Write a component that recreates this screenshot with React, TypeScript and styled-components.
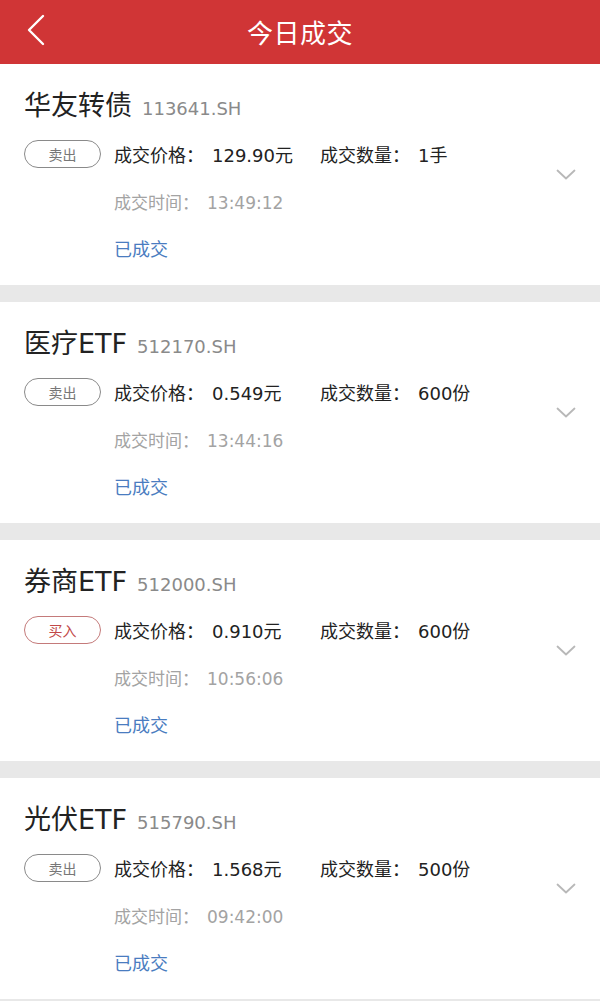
import styled, { createGlobalStyle } from "styled-components";

const GlobalStyle = createGlobalStyle`
	html, body {
		margin: 0;
		padding: 0;
		background: #e8e8e8;
		font-family: "DejaVu Sans", "Noto Sans CJK SC", sans-serif;
	}
`;

type Trade = {
	name: string;
	code: string;
	side: "buy" | "sell";
	price: string;
	qty: string;
	time: string;
};

const trades: Trade[] = [
	{ name: "华友转债", code: "113641.SH", side: "sell", price: "129.90元", qty: "1手", time: "13:49:12" },
	{ name: "医疗ETF", code: "512170.SH", side: "sell", price: "0.549元", qty: "600份", time: "13:44:16" },
	{ name: "券商ETF", code: "512000.SH", side: "buy", price: "0.910元", qty: "600份", time: "10:56:06" },
	{ name: "光伏ETF", code: "515790.SH", side: "sell", price: "1.568元", qty: "500份", time: "09:42:00" },
];

const BackIcon = () => (
	<svg width="20" height="32" viewBox="0 0 20 32" fill="none">
		<path d="M17 2 L3 16 L17 30" stroke="#fff" strokeWidth="2.4" strokeLinecap="round" strokeLinejoin="round" />
	</svg>
);

const ChevronDown = () => (
	<svg width="20" height="12" viewBox="0 0 20 12" fill="none">
		<path d="M1.5 1.5 L10 9.5 L18.5 1.5" stroke="#b8b8b8" strokeWidth="1.8" strokeLinecap="round" strokeLinejoin="round" />
	</svg>
);

const App = () => {
	return (
		<Page>
			<GlobalStyle />
			<Header>
				<BackButton>
					<BackIcon />
				</BackButton>
				<Title>今日成交</Title>
			</Header>
			<List>
				{trades.map((t) => (
					<Card key={t.code}>
						<Content>
							<NameRow>
								<StockName>{t.name}</StockName>
								<StockCode>{t.code}</StockCode>
							</NameRow>
							<Details>
								<SideBadge side={t.side}>{t.side === "buy" ? "买入" : "卖出"}</SideBadge>
								<Fields>
									<Field $wide>
										成交价格：<Value>{t.price}</Value>
									</Field>
									<Field>
										成交数量：<Value>{t.qty}</Value>
									</Field>
								</Fields>
								<Spacer />
								<TimeText>
									成交时间：<Value>{t.time}</Value>
								</TimeText>
								<Spacer />
								<Status>已成交</Status>
							</Details>
						</Content>
						<Expand>
							<ChevronDown />
						</Expand>
					</Card>
				))}
			</List>
		</Page>
	);
};

const Page = styled.div`
	width: 600px;
	min-height: 1001px;
	background: #e8e8e8;
`;

const Header = styled.div`
	height: 64px;
	background: #d03536;
	display: flex;
	align-items: center;
	justify-content: center;
	position: relative;
`;

const BackButton = styled.div`
	position: absolute;
	left: 26px;
	top: 14px;
	display: flex;
`;

const Title = styled.div`
	color: #fff;
	font-family: "Noto Sans CJK SC", sans-serif;
	font-size: 26px;
	font-weight: 400;
	letter-spacing: 0.5px;
	margin-top: -2px;
`;

const List = styled.div`
	display: flex;
	flex-direction: column;
	gap: 17px;
`;

const Card = styled.div`
	background: #fff;
	height: 221px;
	box-sizing: border-box;
	padding: 25px 24px 0 24px;
	display: flex;
	align-items: flex-start;
`;

const Content = styled.div`
	flex: 1;
	display: flex;
	flex-direction: column;
`;

const NameRow = styled.div`
	display: flex;
	align-items: baseline;
	gap: 10px;
	height: 34px;
	line-height: 34px;
`;

const StockName = styled.span`
	font-size: 27px;
	color: #222;
`;

const StockCode = styled.span`
	font-size: 18px;
	color: #8a8a8a;
`;

const Details = styled.div`
	display: grid;
	grid-template-columns: 77px 1fr;
	column-gap: 13px;
	margin-top: 17px;
`;

const SideBadge = styled.div<{ side: "buy" | "sell" }>`
	box-sizing: border-box;
	height: 28px;
	border-radius: 14px;
	border: 1px solid ${(p) => (p.side === "buy" ? "#c47a7a" : "#8a8a8a")};
	color: ${(p) => (p.side === "buy" ? "#c24848" : "#777")};
	font-family: "Noto Sans CJK SC", sans-serif;
	font-size: 14px;
	display: flex;
	align-items: center;
	justify-content: center;
`;

const Fields = styled.div`
	display: flex;
	align-items: center;
	height: 28px;
`;

const Field = styled.span<{ $wide?: boolean }>`
	font-size: 18px;
	color: #222;
	min-width: ${(p) => (p.$wide ? "206px" : "auto")};
`;

const Value = styled.span`
	margin-left: 8px;
`;

const Spacer = styled.div``;

const TimeText = styled.div`
	margin-top: 23px;
	font-size: 17px;
	line-height: 24px;
	color: #a3a3a3;
`;

const Status = styled.div`
	margin-top: 23px;
	font-size: 18px;
	line-height: 24px;
	color: #4a7cc0;
`;

const Expand = styled.div`
	display: flex;
	margin-top: 80px;
`;

export default App;
